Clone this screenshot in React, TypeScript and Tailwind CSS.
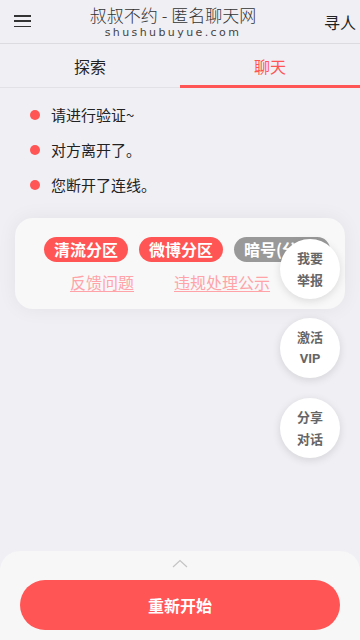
import React from "react";

const font = { fontFamily: '"Noto Sans CJK SC", "Noto Sans", sans-serif' };

function Header() {
  return (
    <header className="relative flex h-[44px] items-center justify-center border-b border-[#dcdbe0]">
      <button className="absolute left-[14px] top-[15px] flex h-[12px] w-[17px] flex-col justify-between">
        <span className="block h-[1.5px] w-full bg-[#333]" />
        <span className="block h-[1.5px] w-full bg-[#333]" />
        <span className="block h-[1.5px] w-full bg-[#333]" />
      </button>
      <div className="mr-[14px] flex flex-col items-center">
        <div className="text-[17px] font-light leading-[22px] text-[#333]">
          叔叔不约<span className="mx-[4px]">-</span>匿名聊天网
        </div>
        <div className="text-[11px] leading-[13px] tracking-[2.4px] text-[#444]" style={{ fontFamily: '"DejaVu Sans", sans-serif' }}>
          shushubuyue.com
        </div>
      </div>
      <span className="absolute right-[4px] top-[10px] text-[16px] text-[#222]">寻人</span>
    </header>
  );
}

function Tabs() {
  return (
    <nav className="flex h-[44px] border-b border-[#e2e1e6]">
      <div className="flex flex-1 items-center justify-center text-[16px] text-[#222]">探索</div>
      <div className="relative flex flex-1 items-center justify-center text-[16px] text-[#ff5555]">
        聊天
        <span className="absolute bottom-[-1px] left-0 right-0 h-[3px] bg-[#ff5555]" />
      </div>
    </nav>
  );
}

const messages = ["请进行验证~", "对方离开了。", "您断开了连线。"];

function FloatBtn({ top, lines, vip }: { top: number; lines: string[]; vip?: boolean }) {
  return (
    <div
      className="absolute right-[20px] flex h-[60px] w-[60px] flex-col items-center justify-center rounded-full bg-white text-[13px] font-bold leading-[22px] text-[#666] shadow-[0_2px_8px_rgba(0,0,0,0.12)]"
      style={{ top }}
    >
      {lines.map((l) => (
        <span key={l} style={vip && l === "VIP" ? { fontFamily: '"Roboto", sans-serif' } : undefined}>
          {l}
        </span>
      ))}
    </div>
  );
}

export default function App() {
  return (
    <div className="relative h-[640px] w-[360px] overflow-hidden bg-[#f0eff4]" style={font}>
      <Header />
      <Tabs />
      <ul className="flex flex-col gap-[13px] pl-[30px] pt-[16px]">
        {messages.map((m) => (
          <li key={m} className="flex h-[22px] items-center text-[15px] text-[#222]">
            <span className="mr-[11px] h-[10px] w-[10px] rounded-full bg-[#ff5555]" />
            {m}
          </li>
        ))}
      </ul>
      <div className="mx-[15px] mt-[22px] h-[91px] overflow-hidden rounded-[18px] bg-[#f8f8f8] shadow-[0_0_20px_rgba(0,0,0,0.06)]">
        <div className="flex gap-[11px] whitespace-nowrap pl-[29px] pt-[19px]">
          <span className="rounded-full bg-[#ff5555] px-[10px] text-[16px] font-bold leading-[25px] text-white">清流分区</span>
          <span className="rounded-full bg-[#ff5555] px-[10px] text-[16px] font-bold leading-[25px] text-white">微博分区</span>
          <span className="rounded-full bg-[#999] px-[10px] text-[16px] font-bold leading-[25px] text-white">暗号(分区)</span>
        </div>
        <div className="flex gap-[40px] pl-[55px] pt-[9px] text-[16px] leading-[22px] text-[#ffa3a8]">
          <span className="underline underline-offset-2">反馈问题</span>
          <span className="underline underline-offset-2">违规处理公示</span>
        </div>
      </div>
      <FloatBtn top={239} lines={["我要", "举报"]} />
      <FloatBtn top={318} lines={["激活", "VIP"]} vip />
      <FloatBtn top={398} lines={["分享", "对话"]} />
      <div className="absolute bottom-0 left-0 right-0 h-[89px] rounded-t-[20px] bg-[#f7f7f7]">
        <div className="flex justify-center pt-[8px]">
          <svg width="16" height="9" viewBox="0 0 16 9" fill="none">
            <path d="M1 8 L8 1.5 L15 8" stroke="#c4c4c4" strokeWidth="1.2" />
          </svg>
        </div>
        <button className="mx-[20px] mt-[12px] flex h-[50px] w-[320px] items-center justify-center rounded-full bg-[#ff5555] text-[16px] font-bold text-white">
          重新开始
        </button>
      </div>
    </div>
  );
}
